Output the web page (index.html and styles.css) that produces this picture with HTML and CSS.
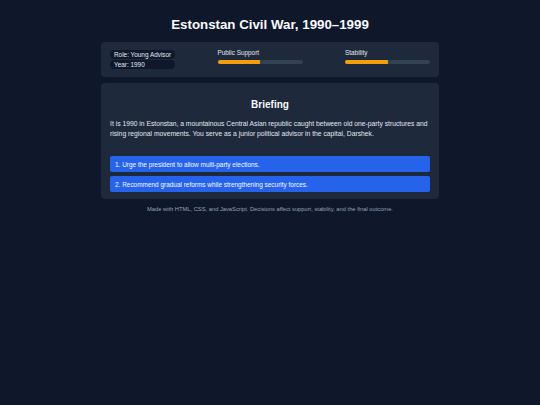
FILE: index.html
```html
<!DOCTYPE html>
<html lang="en">
<head>
<meta charset="utf-8">
<title>Estonstan Civil War, 1990–1999</title>
<link rel="stylesheet" href="styles.css">
</head>
<body>
<div class="app">
  <h1 class="title">Estonstan Civil War, 1990–1999</h1>
  <section class="status panel">
    <div class="pills">
      <span class="pill">Role: Young Advisor</span>
      <span class="pill">Year: 1990</span>
    </div>
    <div class="meter">
      <div class="meter-label">Public Support</div>
      <div class="track"><div class="fill" style="width:50%"></div></div>
    </div>
    <div class="meter">
      <div class="meter-label">Stability</div>
      <div class="track"><div class="fill" style="width:50%"></div></div>
    </div>
  </section>
  <section class="briefing panel">
    <h2 class="heading">Briefing</h2>
    <p class="text">It is 1990 in Estonstan, a mountainous Central Asian republic caught between old one-party structures and rising regional movements. You serve as a junior political advisor in the capital, Darshek.</p>
    <div class="choices">
      <button class="choice">1. Urge the president to allow multi-party elections.</button>
      <button class="choice">2. Recommend gradual reforms while strengthening security forces.</button>
    </div>
  </section>
  <footer class="footer">Made with HTML, CSS, and JavaScript. Decisions affect support, stability, and the final outcome.</footer>
</div>
</body>
</html>
```
FILE: styles.css
```css
html, body {
  margin: 0;
  padding: 0;
  background: #0f172a;
}
body {
  font-family: "Liberation Sans", Arial, sans-serif;
  color: #e2e8f0;
  padding-top: 16px;
}
.app {
  width: 338px;
  margin: 0 auto;
}
.title {
  margin: 0 0 8px;
  font-size: 13.3px;
  line-height: 18px;
  text-align: center;
  color: #f8fafc;
  font-weight: bold;
}
.panel {
  background: #1e293b;
  border-radius: 4px;
}
.status {
  display: flex;
  justify-content: space-between;
  align-items: flex-start;
  padding: 8px 9px;
}
.pills {
  display: flex;
  flex-direction: column;
  gap: 1px;
  width: 65px;
}
.pill {
  display: block;
  background: #0f172a;
  border-radius: 6px;
  font-size: 6.4px;
  line-height: 9px;
  padding: 0 4px;
  color: #e2e8f0;
  white-space: nowrap;
}
.meter {
  width: 85px;
}
.meter-label {
  font-size: 6.4px;
  line-height: 8px;
  color: #e2e8f0;
  margin-bottom: 3px;
  margin-top: -1px;
}
.track {
  height: 4px;
  background: #334155;
  border-radius: 2px;
  overflow: hidden;
}
.fill {
  height: 100%;
  background: #f59e0b;
}
.briefing {
  margin-top: 6px;
  padding: 15px 9px 7px;
}
.heading {
  margin: 0;
  font-size: 10px;
  line-height: 14px;
  text-align: center;
  color: #f8fafc;
}
.text {
  margin: 7px 0 0;
  font-size: 6.75px;
  line-height: 10px;
  color: #e2e8f0;
}
.choices {
  margin-top: 17px;
  display: flex;
  flex-direction: column;
  gap: 4px;
}
.choice {
  display: block;
  width: 100%;
  height: 16px;
  border: 0;
  border-radius: 2px;
  background: #2563eb;
  color: #f8fafc;
  font-family: inherit;
  font-size: 6.45px;
  text-align: left;
  padding: 0 5px;
}
.footer {
  margin-top: 6px;
  text-align: center;
  font-size: 5.75px;
  line-height: 8px;
  color: #94a3b8;
}
```
